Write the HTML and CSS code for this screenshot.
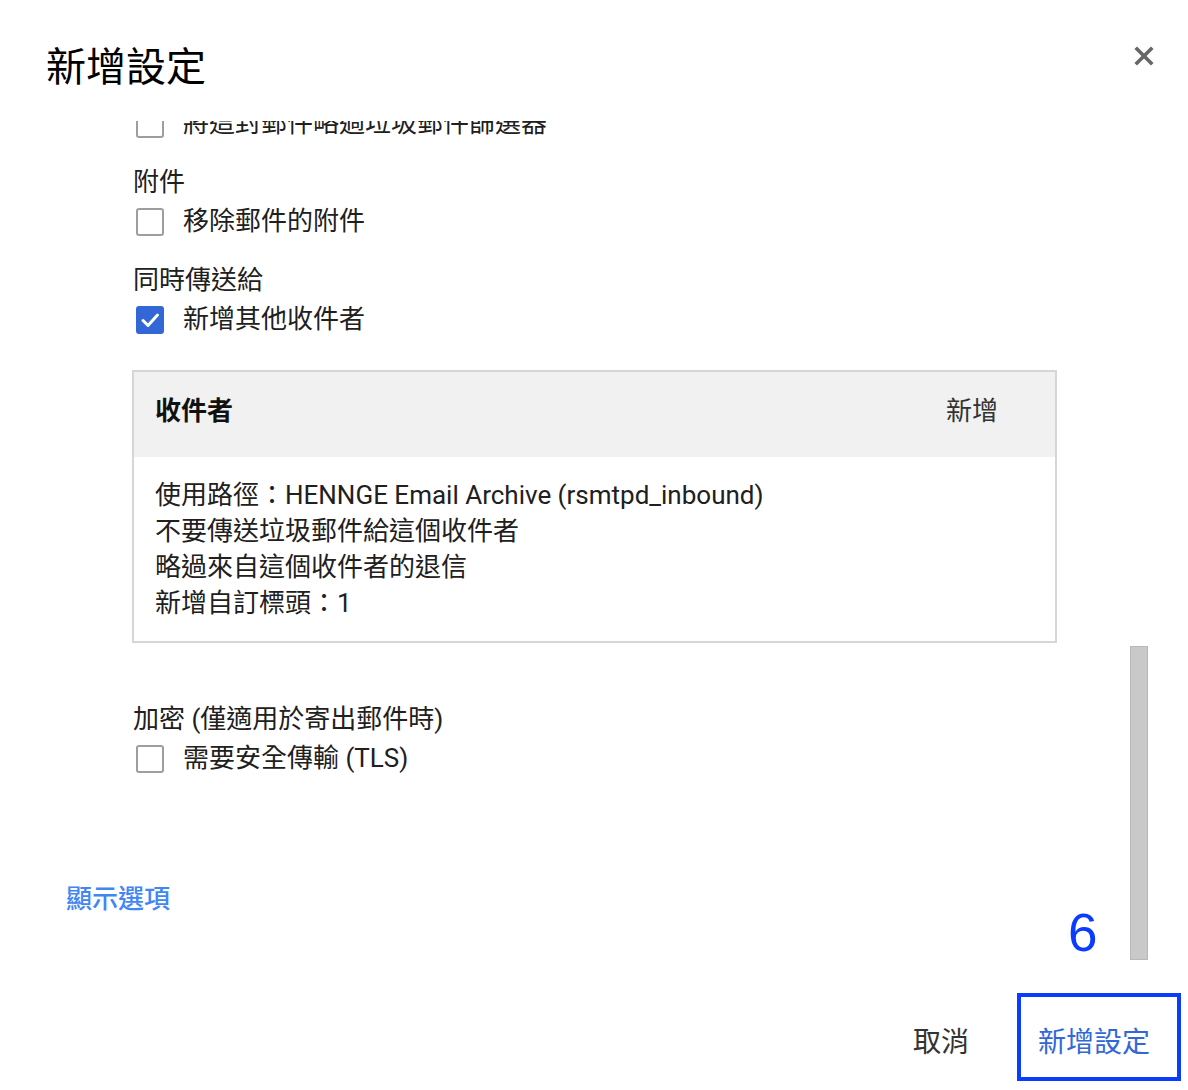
FILE: index.html
```html
<!DOCTYPE html>
<html lang="zh-Hant">
<head>
<meta charset="utf-8">
<title>新增設定</title>
<link rel="stylesheet" href="styles.css">
</head>
<body>
<div class="dialog">
  <div class="header">
    <h1 class="title">新增設定</h1>
    <button class="close" aria-label="關閉">
      <svg width="20" height="20" viewBox="0 0 20 20"><path d="M3 3L17 17M17 3L3 17" stroke="#666" stroke-width="3.6" stroke-linecap="square" fill="none"/></svg>
    </button>
  </div>
  <div class="main">
    <div class="scroll">
      <div class="list">
        <div class="group clipped">
          <div class="row"><span class="box"></span><span class="text">將這封郵件略過垃圾郵件篩選器</span></div>
        </div>
        <div class="group">
          <div class="label">附件</div>
          <div class="row"><span class="box"></span><span class="text">移除郵件的附件</span></div>
        </div>
        <div class="group">
          <div class="label">同時傳送給</div>
          <div class="row"><span class="box checked"><svg width="28" height="28" viewBox="0 0 28 28"><path d="M7 14.5L12 19.5L21.5 9" stroke="#fff" stroke-width="3" fill="none" stroke-linecap="round" stroke-linejoin="round"/></svg></span><span class="text">新增其他收件者</span></div>
        </div>
        <div class="card">
          <div class="card-head">
            <span class="card-title">收件者</span>
            <span class="card-action">新增</span>
          </div>
          <div class="card-body">
            <div class="line">使用路徑：HENNGE Email Archive (rsmtpd_inbound)</div>
            <div class="line">不要傳送垃圾郵件給這個收件者</div>
            <div class="line">略過來自這個收件者的退信</div>
            <div class="line">新增自訂標頭：1</div>
          </div>
        </div>
        <div class="group enc">
          <div class="label">加密 (僅適用於寄出郵件時)</div>
          <div class="row"><span class="box"></span><span class="text">需要安全傳輸 (TLS)</span></div>
        </div>
      </div>
      <div class="link">顯示選項</div>
    </div>
    <div class="track"><div class="thumb"></div></div>
  </div>
  <div class="footer">
    <button class="btn cancel">取消</button>
    <button class="btn primary">新增設定</button>
  </div>
  <div class="annot">6</div>
</div>
</body>
</html>
```

FILE: styles.css
```css
* { box-sizing: border-box; }
html, body { margin: 0; padding: 0; background: #fff; }
body {
  font-family: Roboto, "Noto Sans CJK TC", "Noto Sans", sans-serif;
  color: #202020;
}
.dialog {
  position: relative;
  width: 1188px;
  height: 1090px;
  display: flex;
  flex-direction: column;
  overflow: hidden;
}
.header {
  height: 121px;
  display: flex;
  justify-content: space-between;
  align-items: flex-start;
  flex-shrink: 0;
}
.title {
  margin: 0;
  padding: 42px 0 0 46px;
  font-size: 40px;
  line-height: 44px;
  font-weight: 400;
  color: #000;
  font-family: "Noto Sans CJK TC", sans-serif;
}
.close {
  margin: 46px 34px 0 0;
  padding: 0;
  border: 0;
  background: none;
  width: 20px;
  height: 20px;
  display: block;
}
.close svg { display: block; }
.main {
  height: 841px;
  display: flex;
  flex-shrink: 0;
}
.scroll {
  flex: 1;
  overflow: hidden;
  padding-left: 66px;
}
.list {
  margin-left: 66px;
  width: 925px;
}
.group { margin-bottom: 20px; }
.group.clipped { margin-top: -17px; }
.label {
  height: 39px;
  line-height: 39px;
  font-size: 26px;
  padding-left: 1px;
}
.row {
  height: 39px;
  display: flex;
  align-items: center;
  font-size: 26px;
}
.box {
  width: 28px;
  height: 28px;
  margin-left: 4px;
  border: 2px solid #9e9e9e;
  border-radius: 3px;
  flex-shrink: 0;
  display: block;
  position: relative;
}
.box.checked {
  background: #3367d6;
  border-color: #3367d6;
}
.box.checked svg {
  display: block;
  margin: -2px;
}
.text { margin-left: 19px; line-height: 39px; }
.card {
  margin-top: 31px;
  border: 2px solid #d6d6d6;
  height: 273px;
}
.card-head {
  height: 85px;
  background: #f1f1f1;
  display: flex;
  align-items: center;
  justify-content: space-between;
  padding: 0 57px 13px 21px;
  font-size: 26px;
}
.card-title { font-weight: 700; color: #111; }
.card-action { color: #333; }
.card-body {
  padding: 20px 21px 0 21px;
  font-size: 26px;
}
.line { line-height: 36px; height: 36px; }
.group.enc { margin-top: 57px; }
.link {
  margin-top: 102px;
  height: 39px;
  line-height: 39px;
  font-size: 26px;
  color: #4285f4;
  font-weight: 500;
}
.track {
  width: 18px;
  margin-right: 40px;
  flex-shrink: 0;
}
.thumb {
  margin-top: 525px;
  height: 314px;
  background: #c9c9c9;
  border: 1px solid #b8b8b8;
}
.footer {
  flex: 1;
  display: flex;
  justify-content: flex-end;
  align-items: flex-start;
  padding: 31px 7px 0 0;
}
.btn {
  font-family: "Noto Sans CJK TC", sans-serif;
  font-size: 28px;
  background: none;
  border: 0;
  padding: 0;
  height: 88px;
}
.cancel {
  color: #333;
  margin-right: 48px;
  line-height: 94px;
}
.primary {
  color: #3367d6;
  border: 4px solid #0a3cff;
  width: 164px;
  line-height: 86px;
  text-align: left;
  padding: 0 0 0 17px;
}
.annot {
  position: absolute;
  left: 1068px;
  top: 903px;
  font-family: "Liberation Sans", Arial, sans-serif;
  font-size: 53px;
  line-height: 60px;
  color: #0a3cff;
}
```
